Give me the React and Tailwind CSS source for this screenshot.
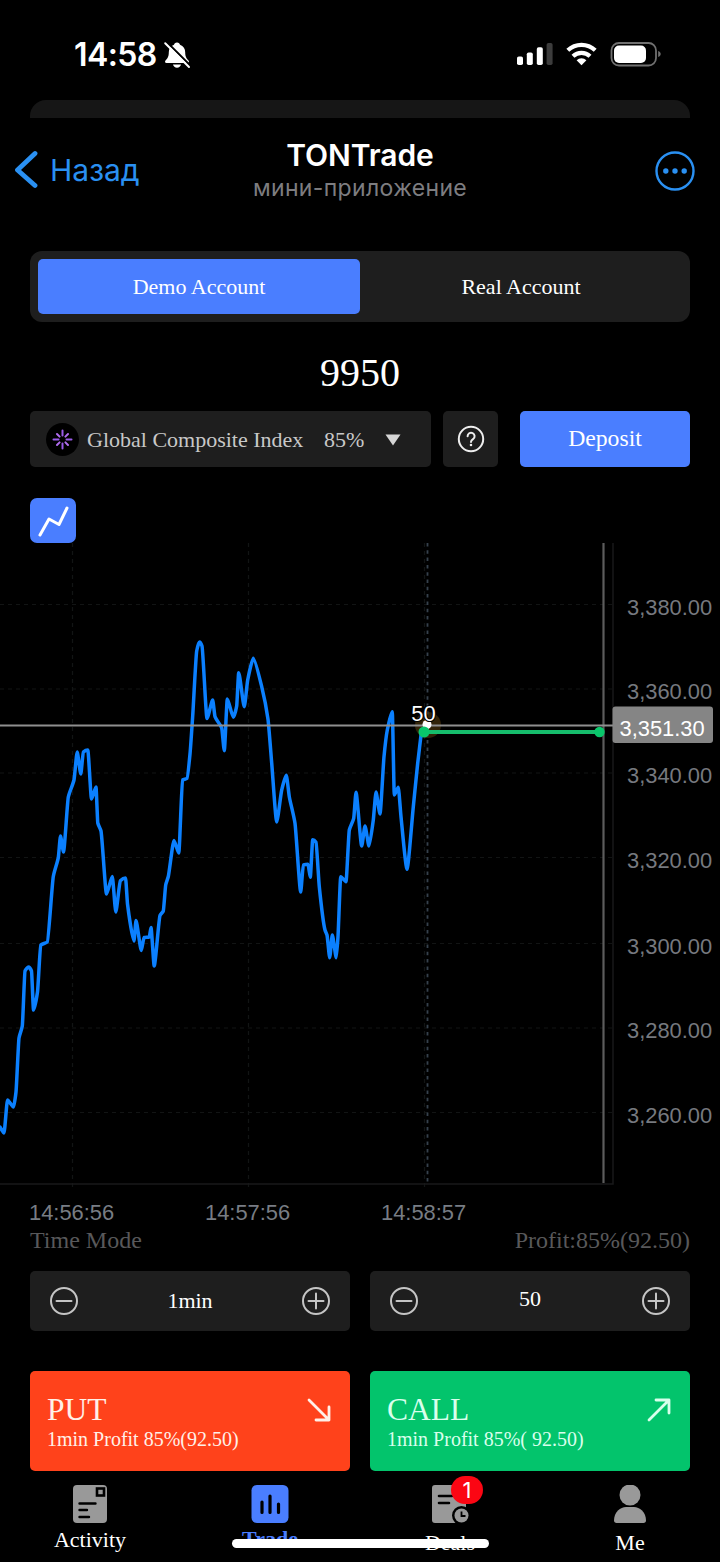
import clsx from 'clsx';

const PRICE_POINTS = [
  [0, 1127], [4, 1133], [7.5, 1100], [13.5, 1107], [16, 1092], [19, 1038], [22.3, 1026],
  [25, 971], [28.5, 967], [31.5, 971], [33.5, 1010], [37.5, 992], [40.7, 945], [47.3, 942],
  [53.3, 876.5], [58.3, 857.6], [60.5, 836], [63.5, 852], [68.3, 797], [74, 780],
  [77.2, 752], [80.8, 774], [83.3, 752], [87.8, 750], [91.5, 799], [96, 787], [97.8, 823],
  [101, 831], [106.5, 894], [112.3, 876.5], [115.8, 912], [120.3, 880.7], [125.6, 878],
  [127.5, 904], [134, 941], [136, 920.6], [141.3, 950.5], [144, 937.5], [149.3, 937],
  [151, 927.5], [154.2, 966], [160, 915.5], [163.3, 911], [165.7, 885], [168.3, 876.5],
  [174, 840.4], [178.8, 853], [182.5, 780], [187, 778.4], [190, 754], [192.7, 716],
  [196.7, 651], [199.5, 642], [202, 646], [207, 718.5], [212.7, 700], [215, 716.7],
  [221.7, 728], [224.3, 750.7], [227.3, 699], [233.3, 717.3], [236.7, 706], [238.7, 672.7],
  [244.3, 706.7], [247.7, 680], [253.3, 658.3], [261.7, 686.7], [268, 719.3], [271.7, 763],
  [276.7, 822], [281.7, 790], [286.3, 775.3], [289.3, 796.7], [295, 823.3], [300.7, 892],
  [303.3, 865], [308, 864.3], [310.3, 877.3], [312.7, 839.7], [316, 842.3], [319.3, 886.7],
  [325, 930], [327, 935], [329.7, 957.7], [332.3, 935], [336.3, 957.7], [338, 936.7],
  [340.7, 876.7], [346, 881.7], [349.3, 830], [353.7, 818.3], [356, 792.3], [361.7, 846],
  [365, 826], [369, 846], [373.3, 820], [376, 792], [380, 814], [384, 756.7], [387.3, 730],
  [392.3, 711.7], [394.3, 795], [398.3, 787.3], [401, 816.7], [407, 869.3], [413.3, 806.7],
  [417.7, 763.3], [421.5, 731],
];

const PRICE_LABELS = [
  { y: 604.5, text: '3,380.00' },
  { y: 689, text: '3,360.00' },
  { y: 773, text: '3,340.00' },
  { y: 857.5, text: '3,320.00' },
  { y: 943.5, text: '3,300.00' },
  { y: 1028, text: '3,280.00' },
  { y: 1112.5, text: '3,260.00' },
];

const TIME_LABELS = [
  { x: 72.5, text: '14:56:56' },
  { x: 248.5, text: '14:57:56' },
  { x: 424.5, text: '14:58:57' },
];

// Monotone cubic interpolation, so the curve never overshoots a tick.
// Short handles keep the peaks tight.
function smoothPath(points) {
  const slopes = points.slice(1).map(([x, y], i) => (y - points[i][1]) / (x - points[i][0]));
  const tangents = points.map((_, i) => {
    if (i === 0) return slopes[0];
    if (i === points.length - 1) return slopes[i - 1];
    const a = slopes[i - 1];
    const b = slopes[i];
    return a * b <= 0 ? 0 : (2 * a * b) / (a + b);
  });

  return points.reduce((d, [x, y], i) => {
    if (i === 0) return `M${x},${y}`;
    const [px, py] = points[i - 1];
    const h = (x - px) * 0.2;
    return `${d}C${px + h},${py + h * tangents[i - 1]} ${x - h},${y - h * tangents[i]} ${x},${y}`;
  }, '');
}

function StatusBar() {
  return (
    <div className="flex h-[100px] items-start justify-between pt-[36px] pr-[58px] pl-[74px] font-['Inter',sans-serif]">
      <div className="flex items-center gap-[6px]">
        <span className="text-[32px] leading-[38px] font-semibold tracking-[-0.6px]">14:58</span>
        <svg width="28" height="28" viewBox="0 0 28 28">
          <path
            d="M14 1.5c-1.800 0-2.800 1.100-3 2.300C7.500 5 5.800 7.800 5.800 11.200c0 4.500-1.300 6.300-3.300 8.300-.9 1-.5 2.500 1 2.500h21c1.500 0 1.900-1.500 1-2.500-2-2-3.300-3.800-3.300-8.300 0-3.400-1.700-6.200-5.200-7.400-.2-1.200-1.200-2.300-3-2.300z"
            fill="#fff"
          />
          <path d="M10 23.600h8c-.4 1.900-2 3.200-4 3.200s-3.600-1.300-4-3.200z" fill="#fff" />
          <path d="M4 1.200 28 25.200" stroke="#000" strokeWidth="2" />
          <path d="M2.200 2.200 26 26" stroke="#fff" strokeWidth="2" strokeLinecap="round" />
        </svg>
      </div>
      <svg width="146" height="28" viewBox="516 40 146 28" className="mt-[4px]">
        <rect x="517" y="56.500" width="6" height="8.500" rx="1.800" fill="#fff" />
        <rect x="526.800" y="52.500" width="6" height="12.500" rx="1.800" fill="#fff" />
        <rect x="536.800" y="47.200" width="6" height="17.800" rx="1.800" fill="#fff" />
        <rect x="546.600" y="43" width="6" height="22" rx="1.800" fill="#3c3c3c" />
        <g fill="none" stroke="#fff" strokeWidth="4.200">
          <path d="M567.800 50.300a20 20 0 0 1 27.400 0" />
          <path d="M573 56.200a12.300 12.300 0 0 1 17 0" />
        </g>
        <path d="M581.500 65.200l-4.900-5a7 7 0 0 1 9.800 0z" fill="#fff" />
        <rect x="611.500" y="43" width="44.500" height="22.500" rx="7.500" fill="none" stroke="#707070" strokeWidth="1.800" />
        <rect x="614" y="45.500" width="32" height="17.500" rx="5" fill="#fff" />
        <path d="M658.200 51v6c1.500-.6 2.500-1.700 2.500-3s-1-2.400-2.500-3z" fill="#707070" />
      </svg>
    </div>
  );
}

function Header() {
  return (
    <header className="grid h-[133px] grid-cols-[1fr_auto_1fr] items-start font-['Inter',sans-serif]">
      <button className="flex items-center gap-[12px] pt-[31px] pl-[13px] text-[#2a90f2]">
        <svg width="25" height="42" viewBox="0 0 25 42" fill="none">
          <path d="M22 4.500 4.500 21 22 36.500" stroke="currentColor" strokeWidth="4.800" strokeLinecap="round" strokeLinejoin="round" />
        </svg>
        <span className="text-[30px] leading-[42px]">Назад</span>
      </button>
      <div className="pt-[19px] text-center">
        <h1 className="text-[30px] leading-[37px] font-semibold tracking-[-0.1px]">TONTrade</h1>
        <p className="text-[23px] leading-[28px] tracking-[0.350px] text-[#7d7d80]">мини-приложение</p>
      </div>
      <div className="flex justify-end pt-[33px] pr-[25px]">
        <svg width="40" height="40" viewBox="0 0 40 40" fill="#2a90f2">
          <circle cx="20" cy="20" r="18.500" fill="none" stroke="#2a90f2" strokeWidth="2.400" />
          <circle cx="10.800" cy="20" r="2.700" />
          <circle cx="20" cy="20" r="2.700" />
          <circle cx="29.200" cy="20" r="2.700" />
        </svg>
      </div>
    </header>
  );
}

function AccountTabs() {
  return (
    <div className="mx-[30px] grid h-[71px] grid-cols-2 rounded-xl bg-[#1e1e1e] p-[8px] text-[22px]">
      <button className="rounded-[5px] bg-[#4a7eff]">Demo Account</button>
      <button>Real Account</button>
    </div>
  );
}

function AssetBar() {
  return (
    <div className="mx-[30px] flex h-[56px] text-[22px]">
      <div className="flex w-[401px] items-center rounded-[5px] bg-[#1e1e1e] pl-[16px] text-[#c8c8c8]">
        <svg width="33" height="33" viewBox="0 0 33 33">
          <circle cx="16.500" cy="16.500" r="16.500" fill="#000" />
          <g stroke="#9a5be8" strokeWidth="2" strokeLinecap="round">
            <path d="M16.500 7.500v5M16.500 20.500v5M7.500 16.500h5M20.500 16.500h5" />
            <path d="M11 11l2.600 2.600M19.400 19.400 22 22M22 11l-2.600 2.600M13.600 19.400 11 22" stroke="#b06cf0" />
          </g>
        </svg>
        <span className="ml-[8px] w-[237px]">Global Composite Index</span>
        <span>85%</span>
        <svg width="16" height="12" viewBox="0 0 16 12" className="mt-[2px] ml-[21px]">
          <path d="M.5.5h15L8 11.500z" fill="#d6d6d6" />
        </svg>
      </div>
      <button className="ml-[12px] flex w-[55px] items-center justify-center rounded-[5px] bg-[#1e1e1e]">
        <svg width="28" height="28" viewBox="0 0 28 28" fill="none" stroke="#eee" strokeWidth="2">
          <circle cx="14" cy="14" r="12.200" />
          <path d="M10.600 11.300a3.500 3.500 0 1 1 5.600 2.700c-1.400 1-2.200 1.500-2.200 3.100" strokeLinecap="round" />
          <circle cx="14" cy="20" r="0.600" strokeWidth="1.400" />
        </svg>
      </button>
      <button className="ml-auto w-[170px] rounded-[5px] bg-[#4a7eff] text-[23.700px]">Deposit</button>
    </div>
  );
}

function PriceChart() {
  return (
    <svg
      width="720"
      height="684"
      viewBox="0 543 720 684"
      className="block font-['Liberation_Sans',sans-serif] text-[21.900px]"
    >
      <g stroke="#121414" strokeWidth="1.200" strokeDasharray="4 4">
        {PRICE_LABELS.map(({ y }) => (
          <line key={y} x1="0" x2="613" y1={y} y2={y} />
        ))}
        {TIME_LABELS.map(({ x }) => (
          <line key={x} x1={x} x2={x} y1="543" y2="1190" />
        ))}
      </g>
      <path d="M0 1184h613V543" fill="none" stroke="#18191a" strokeWidth="1.500" />
      <line x1="427.500" x2="427.500" y1="543" y2="1184" stroke="#36414d" strokeWidth="1.800" strokeDasharray="3.500 3.800" />
      <line x1="603.500" x2="603.500" y1="543" y2="1183" stroke="#5c5c5c" strokeWidth="2.200" />

      <path
        d={smoothPath(PRICE_POINTS)}
        fill="none"
        stroke="#0b80ff"
        strokeWidth="3.500"
        strokeLinecap="round"
        strokeLinejoin="round"
      />
      <circle cx="428" cy="725" r="13" fill="#c98a1e" fillOpacity="0.250" />
      <line x1="0" x2="613" y1="725.500" y2="725.500" stroke="#8f8f8f" strokeWidth="1.800" />
      <circle cx="427" cy="724.500" r="4.500" fill="#fff" />
      <line x1="424" x2="599" y1="732" y2="732" stroke="#16bd6c" strokeWidth="3.800" />
      <circle cx="424" cy="732" r="5.500" fill="#09c76b" />
      <circle cx="599.500" cy="732" r="5.200" fill="#09c76b" />
      <text x="423.500" y="721" fill="#fff" stroke="#000" strokeWidth="2" paintOrder="stroke" textAnchor="middle">
        50
      </text>

      {PRICE_LABELS.map(({ y, text }) => (
        <text key={text} x="627" y={y + 10} fill="#76797f">
          {text}
        </text>
      ))}
      <rect x="612.500" y="706.500" width="100.500" height="36.500" rx="3" fill="#858585" />
      <text x="619.500" y="735.500" fill="#fff">3,351.30</text>
      {TIME_LABELS.map(({ x, text }) => (
        <text key={text} x={x - 0.900} y="1219.500" fill="#787d84" textAnchor="middle">
          {text}
        </text>
      ))}
    </svg>
  );
}

function StepIcon({ plus }) {
  return (
    <svg width="30" height="30" viewBox="0 0 30 30" fill="none" stroke="#c4c4c4" strokeWidth="2" strokeLinecap="round">
      <circle cx="15" cy="15" r="13" />
      <path d={plus ? 'M7.500 15h15M15 7.500v15' : 'M7.500 15h15'} />
    </svg>
  );
}

function Stepper({ value, className }) {
  return (
    <div className="flex h-[60px] items-center justify-between rounded-[5px] bg-[#1e1e1e] px-[19px]">
      <StepIcon />
      <span className={clsx('text-[22px] leading-[30px]', className)}>{value}</span>
      <StepIcon plus />
    </div>
  );
}

function TradeButton({ label, detail, arrow, className }) {
  return (
    <button className={clsx('flex h-[100px] items-start justify-between rounded-[5px] pr-[19px] pl-[17px] text-left', className)}>
      <span className="flex flex-col pt-[23px]">
        <span className="text-[31.500px] leading-[32px]">{label}</span>
        <span className="text-[20px] leading-[26px]">{detail}</span>
      </span>
      <svg
        width="24"
        height="24"
        viewBox="0 0 24 24"
        className="mt-[27px]"
        fill="none"
        stroke="currentColor"
        strokeWidth="2.800"
        strokeLinecap="round"
        strokeLinejoin="round"
      >
        <path d={arrow} />
      </svg>
    </button>
  );
}

function ActivityIcon() {
  return (
    <svg width="34" height="38" viewBox="0 0 34 38">
      <rect width="34" height="38" rx="4" fill="#999" />
      <rect x="24" y="3.500" width="7" height="7" fill="#999" stroke="#000" strokeWidth="2.600" />
      <path d="M6.500 18.500h16M6.500 25h7.500M6.500 32h9.500" stroke="#000" strokeWidth="2.400" strokeLinecap="round" />
    </svg>
  );
}

function TradeIcon() {
  return (
    <svg width="38" height="38" viewBox="0 0 38 38">
      <rect x="0.500" width="37" height="38" rx="5.500" fill="#4a7eff" />
      <path d="M11 17v10.500M19 11v16.500M27.500 19v8.500" stroke="#000" strokeWidth="3.200" strokeLinecap="round" />
    </svg>
  );
}

function DealsIcon() {
  return (
    <svg width="38" height="38" viewBox="0 0 38 38">
      <path d="M4 0h27a4 4 0 0 1 4 4v34H4a3 3 0 0 1-3-3V3a3 3 0 0 1 3-3z" fill="#999" />
      <path d="M8 11h13M8 18h10" stroke="#000" strokeWidth="2.600" strokeLinecap="round" />
      <circle cx="30.500" cy="30.500" r="9.500" fill="#000" />
      <circle cx="30.500" cy="30.500" r="7" fill="#999" />
      <path d="M30.500 26.500v4.500h4" fill="none" stroke="#000" strokeWidth="1.800" />
    </svg>
  );
}

function MeIcon() {
  return (
    <svg width="34" height="38" viewBox="0 0 34 38" fill="#999">
      <circle cx="17" cy="10" r="10.500" />
      <path d="M1 35.500C1 27 7.500 22 13 22h8c5.500 0 12 5 12 13.500 0 1.500-1 2.500-2.500 2.500h-27C2 38 1 37 1 35.500z" />
    </svg>
  );
}

function NavItem({ icon, label, badge, className }) {
  return (
    <div className="flex flex-col items-center pt-[14px]">
      <div className="relative flex h-[38px] justify-center">
        {icon}
        {badge && (
          <span className="absolute -top-[9px] left-[20px] flex h-[28px] w-[32px] items-center justify-center rounded-full bg-[#fb0613] font-['Inter',sans-serif] text-[22px] leading-none">
            {badge}
          </span>
        )}
      </div>
      <span className={clsx('text-[22px] leading-[26px]', className)}>{label}</span>
    </div>
  );
}

export default function App() {
  return (
    <div className="relative flex h-[1562px] w-[720px] flex-col overflow-hidden bg-black font-['Liberation_Serif',serif] text-white">
      <StatusBar />
      <div className="mx-[30px] h-[18px] rounded-t-[16px] bg-[#161616]" />
      <Header />
      <AccountTabs />
      <div className="flex h-[89px] items-center justify-center pt-[12px] text-[40px]">9950</div>
      <AssetBar />

      <div className="mt-[31px] flex h-[45px] pl-[30px]">
        <button className="flex w-[46px] items-center justify-center rounded-[7px] bg-[#4a7eff]">
          <svg width="34" height="34" viewBox="0 0 34 34" fill="none" stroke="#fff" strokeWidth="3">
            <path d="M4 31 13 15l10 5.500L31 4" strokeLinecap="round" strokeLinejoin="round" />
          </svg>
        </button>
      </div>
      <PriceChart />

      <div className="flex h-[44px] items-start justify-between px-[30px] text-[24px] leading-[26px] text-[#58585a]">
        <span>Time Mode</span>
        <span>Profit:85%(92.50)</span>
      </div>
      <div className="mx-[30px] grid grid-cols-2 gap-[20px]">
        <Stepper value="1min" />
        <Stepper value="50" className="-mt-[4px]" />
      </div>
      <div className="mx-[30px] mt-[40px] grid grid-cols-2 gap-[20px]">
        <TradeButton
          label="PUT"
          detail="1min Profit 85%(92.50)"
          arrow="M2 2l20 20M22 9v13H9"
          className="bg-[#ff421b] text-[#fff0e8]"
        />
        <TradeButton
          label="CALL"
          detail="1min Profit 85%( 92.50)"
          arrow="M2 22 22 2M9 2h13v13"
          className="bg-[#03c46c] text-[#d9ffec]"
        />
      </div>

      <nav className="grid h-[91px] grid-cols-4">
        <NavItem icon={<ActivityIcon />} label="Activity" className="mt-[4px]" />
        <NavItem icon={<TradeIcon />} label="Trade" className="mt-[3px] font-bold text-[#4a7eff]" />
        <NavItem icon={<DealsIcon />} label="Deals" badge="1" className="mt-[7px]" />
        <NavItem icon={<MeIcon />} label="Me" className="mt-[7px]" />
      </nav>
      <div className="absolute top-[1539px] left-[232px] h-[9px] w-[257px] rounded-full bg-white" />
    </div>
  );
}
